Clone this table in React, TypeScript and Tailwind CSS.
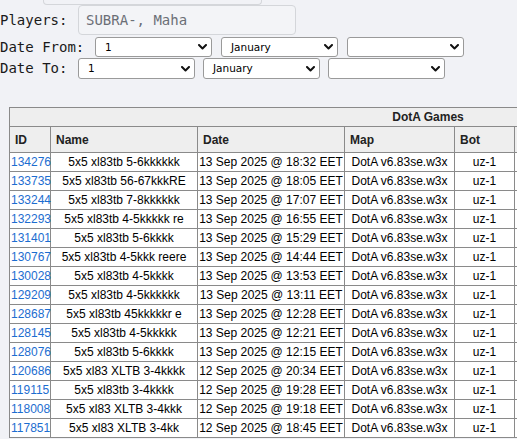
import React from "react";

const rows: [string, string, string][] = [
  ["134276", "5x5 xl83tb 5-6kkkkkk", "13 Sep 2025 @ 18:32 EET"],
  ["133735", "5x5 xl83tb 56-67kkkRE", "13 Sep 2025 @ 18:05 EET"],
  ["133244", "5x5 xl83tb 7-8kkkkkk", "13 Sep 2025 @ 17:07 EET"],
  ["132293", "5x5 xl83tb 4-5kkkkk re", "13 Sep 2025 @ 16:55 EET"],
  ["131401", "5x5 xl83tb 5-6kkkk", "13 Sep 2025 @ 15:29 EET"],
  ["130767", "5x5 xl83tb 4-5kkk reere", "13 Sep 2025 @ 14:44 EET"],
  ["130028", "5x5 xl83tb 4-5kkkk", "13 Sep 2025 @ 13:53 EET"],
  ["129209", "5x5 xl83tb 4-5kkkkkk", "13 Sep 2025 @ 13:11 EET"],
  ["128687", "5x5 xl83tb 45kkkkkr e", "13 Sep 2025 @ 12:28 EET"],
  ["128145", "5x5 xl83tb 4-5kkkkk", "13 Sep 2025 @ 12:21 EET"],
  ["128076", "5x5 xl83tb 5-6kkkk", "13 Sep 2025 @ 12:15 EET"],
  ["120686", "5x5 xl83 XLTB 3-4kkkk", "12 Sep 2025 @ 20:34 EET"],
  ["119115", "5x5 xl83tb 3-4kkkk", "12 Sep 2025 @ 19:28 EET"],
  ["118008", "5x5 xl83 XLTB 3-4kkk", "12 Sep 2025 @ 19:18 EET"],
  ["117851", "5x5 xl83 XLTB 3-4kk", "12 Sep 2025 @ 18:45 EET"],
];

function Sel({ value, h }: { value: string; h: string }) {
  return (
    <div
      className={`flex w-[117px] ${h} items-center justify-between rounded-[3px] border border-[#9a9a9a] bg-white pl-[9px] pr-[4px] text-[10.5px] text-black`}
      style={{ fontFamily: '"DejaVu Sans", sans-serif' }}
    >
      <span className="leading-none">{value}</span>
      <svg width="9" height="6" viewBox="0 0 9 6" className="shrink-0">
        <path d="M1 1 L4.5 4.5 L8 1" fill="none" stroke="#111" strokeWidth="2" strokeLinecap="round" strokeLinejoin="round" />
      </svg>
    </div>
  );
}

export default function App() {
  const mono = { fontFamily: '"DejaVu Sans Mono", monospace' };
  const th = "border border-[#8a8a8a] bg-[#eeeeee] px-[5px] text-left font-bold text-[#222]";
  const td = "border border-[#8a8a8a] bg-white p-0 text-center h-[19px] leading-[18px] whitespace-nowrap";
  return (
    <div className="h-[439px] w-[517px] overflow-hidden bg-[#f1f2f6]">
      <div className="ml-[43px] h-[5px] w-[219px] rounded-b-[4px] border-x border-b border-[#d4d6da]" />
      <div className="text-[14px] text-[#1a1a1a]" style={mono}>
        <div className="flex h-[30px] items-center">
          <span className="w-[78px]">Players:</span>
          <div className="flex h-[30px] w-[218px] items-center rounded-[4px] border border-[#d4d6da] bg-[#f3f4f7] pl-[7px] text-[#6b6f76]">
            SUBRA-, Maha
          </div>
        </div>
        <div className="mt-[2px] flex h-[20px] items-center">
          <span className="w-[95px]">Date From:</span>
          <div className="flex gap-[9px]">
            <Sel value="1" h="h-[20px]" />
            <Sel value="January" h="h-[20px]" />
            <Sel value="" h="h-[20px]" />
          </div>
        </div>
        <div className="mt-[1px] flex h-[21px] items-center">
          <span className="w-[78px]">Date To:</span>
          <div className="flex gap-[8px]">
            <Sel value="1" h="h-[21px]" />
            <Sel value="January" h="h-[21px]" />
            <Sel value="" h="h-[21px]" />
          </div>
        </div>
      </div>
      <div className="ml-[9px] mt-[28px]">
        <table
          className="w-[837px] table-fixed border-collapse text-[12px] text-black"
          style={{ fontFamily: '"Liberation Sans", Arial, sans-serif' }}
        >
          <colgroup>
            <col className="w-[41px]" />
            <col className="w-[147px]" />
            <col className="w-[147px]" />
            <col className="w-[110px]" />
            <col className="w-[60px]" />
            <col className="w-[332px]" />
          </colgroup>
          <thead>
            <tr>
              <th colSpan={6} className="h-[19px] border border-[#8a8a8a] bg-[#eeeeee] p-0 text-center font-bold text-[#222]">
                DotA Games
              </th>
            </tr>
            <tr>
              <th className={`${th} h-[26px] px-[3px]`}>ID</th>
              <th className={th}>Name</th>
              <th className={th}>Date</th>
              <th className={th}>Map</th>
              <th className={th}>Bot</th>
              <th className={th}></th>
            </tr>
          </thead>
          <tbody>
            {rows.map(([id, name, date]) => (
              <tr key={id}>
                <td className={`${td} text-left pl-[1px]`}>
                  <a className="text-[#1c6dd0]" href="#">{id}</a>
                </td>
                <td className={td}>{name}</td>
                <td className={td}>{date}</td>
                <td className={td}>DotA v6.83se.w3x</td>
                <td className={td}>uz-1</td>
                <td className={td}></td>
              </tr>
            ))}
          </tbody>
        </table>
      </div>
    </div>
  );
}
